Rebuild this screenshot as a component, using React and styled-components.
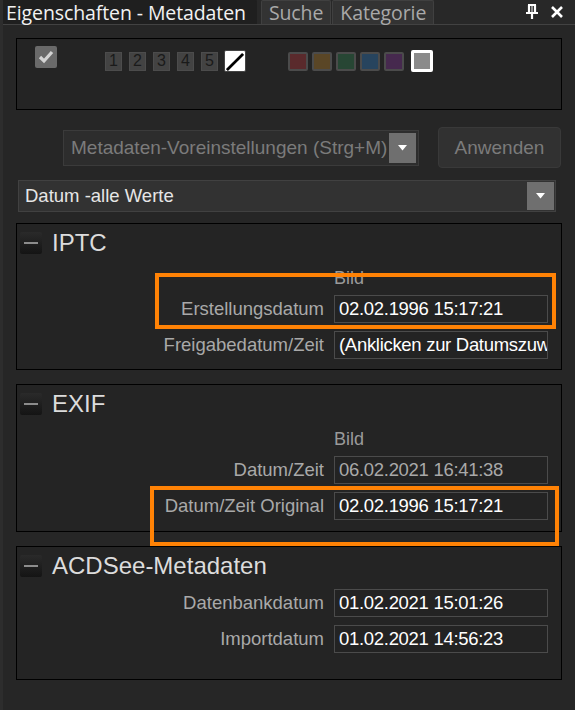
import React from 'react'
import styled, { createGlobalStyle } from 'styled-components'

const GlobalStyle = createGlobalStyle`
  html, body {
    margin: 0;
    padding: 0;
    background: #262626;
  }
  * {
    box-sizing: border-box;
  }
`

const ratings = ['1', '2', '3', '4', '5']
const labels = ['#5a2a2c', '#5a4626', '#274634', '#27445e', '#46294e']

const sections = [
  {
    title: 'IPTC',
    bild: true,
    pb: 10,
    mt: 10,
    rows: [
      { label: 'Erstellungsdatum', value: '02.02.1996 15:17:21' },
      { label: 'Freigabedatum/Zeit', value: '(Anklicken zur Datumszuweisung)' },
    ],
  },
  {
    title: 'EXIF',
    bild: true,
    pb: 11,
    mt: 10,
    rows: [
      { label: 'Datum/Zeit', value: '06.02.2021 16:41:38', muted: true },
      { label: 'Datum/Zeit Original', value: '02.02.1996 15:17:21' },
    ],
  },
  {
    title: 'ACDSee-Metadaten',
    pb: 26,
    mt: 12,
    rows: [
      { label: 'Datenbankdatum', value: '01.02.2021 15:01:26' },
      { label: 'Importdatum', value: '01.02.2021 14:56:23' },
    ],
  },
]

function Arrow() {
  return (
    <svg width='9' height='6' viewBox='0 0 9 6'>
      <path d='M0 0 H9 L4.5 5.5 Z' fill='#fff' />
    </svg>
  )
}

function App() {
  return (
    <>
      <GlobalStyle />
      <Panel>
        <TabBar>
          <Tab active>Eigenschaften - Metadaten</Tab>
          <Tab>Suche</Tab>
          <Tab>Kategorie</Tab>
          <TabTools>
            <svg width='14' height='16' viewBox='0 0 14 16'>
              <path d='M3 1 H11 M4 1 V9 M10 1 V9 M1 9 H13 M7 9 V15' stroke='#fff' strokeWidth='2.2' fill='none' />
              <path d='M7 1 V9' stroke='#fff' strokeWidth='1' />
            </svg>
            <svg width='14' height='14' viewBox='0 0 14 14'>
              <path d='M2 2 L12 12 M12 2 L2 12' stroke='#fff' strokeWidth='2.6' />
            </svg>
          </TabTools>
        </TabBar>

        <Body>
          <TopBox>
            <CheckBox>
              <svg width='16' height='14' viewBox='0 0 16 14'>
                <path d='M2 7 L6 11 L14 2' stroke='#d4d4d4' strokeWidth='3.2' fill='none' />
              </svg>
            </CheckBox>
            <Ratings>
              {ratings.map(r => (
                <RatingBox key={r}>{r}</RatingBox>
              ))}
              <ClearBox>
                <svg width='20' height='20' viewBox='0 0 20 20'>
                  <path d='M1 19 L19 1' stroke='#000' strokeWidth='3.2' />
                </svg>
              </ClearBox>
            </Ratings>
            <Labels>
              {labels.map(c => (
                <LabelBox key={c} color={c} />
              ))}
              <LabelBox color='#8a8a8a' selected />
            </Labels>
          </TopBox>

          <PresetRow>
            <PresetSelect>
              <span>Metadaten-Voreinstellungen (Strg+M)</span>
              <DropButton small>
                <Arrow />
              </DropButton>
            </PresetSelect>
            <ApplyButton>Anwenden</ApplyButton>
          </PresetRow>

          <ViewSelect>
            <span>Datum -alle Werte</span>
            <DropButton>
              <Arrow />
            </DropButton>
          </ViewSelect>

          <Sections>
            {sections.map(s => (
              <Section key={s.title} pb={s.pb}>
                <SectionHead>
                  <Collapse />
                  {s.title}
                </SectionHead>
                <Fields mt={s.mt}>
                  {s.bild && (
                    <>
                      <span />
                      <ColumnTitle>Bild</ColumnTitle>
                    </>
                  )}
                  {s.rows.map(r => (
                    <React.Fragment key={r.label}>
                      <FieldLabel>{r.label}</FieldLabel>
                      <FieldValue muted={r.muted}>{r.value}</FieldValue>
                    </React.Fragment>
                  ))}
                </Fields>
              </Section>
            ))}
          </Sections>
        </Body>

        <Highlight style={{ left: 152, top: 273, width: 401, height: 56 }} />
        <Highlight style={{ left: 147, top: 486, width: 409, height: 60 }} />
      </Panel>
    </>
  )
}

export default App

const Panel = styled.div`
  position: relative;
  width: 575px;
  height: 710px;
  overflow: hidden;
  background: #262626;
  border-left: 3px solid #2d2d2d;
  font-family: 'Liberation Sans', Arial, sans-serif;
`

const TabBar = styled.div`
  display: flex;
  align-items: stretch;
  height: 25px;
  margin-left: -3px;
  background: #282828;
  border-bottom: 1px solid #424242;
`

const Tab = styled.div`
  display: flex;
  align-items: center;
  padding: 0 ${p => (p.active ? '10px' : '7px')} 0 ${p => (p.active ? '5px' : '7px')};
  margin-right: ${p => (p.active ? '4px' : '1px')};
  font-family: 'Open Sans', 'Noto Sans', sans-serif;
  font-size: 19.5px;
  letter-spacing: -0.1px;
  color: ${p => (p.active ? '#f2f2f2' : '#a9a9a9')};
  background: ${p => (p.active ? '#1f1f1f' : '#333')};
  border: 1px solid ${p => (p.active ? '#1f1f1f' : '#404040')};
  border-bottom: none;
  border-radius: 2px 2px 0 0;
  white-space: nowrap;
`

const TabTools = styled.div`
  display: flex;
  align-items: center;
  gap: 11px;
  margin-left: auto;
  padding-right: 11px;
`

const Body = styled.div`
  padding: 13px 13px 0 13px;
`

const TopBox = styled.div`
  display: flex;
  align-items: flex-start;
  height: 72px;
  padding: 7px 0 0 18px;
  background: #242424;
  border: 1px solid #000;
`

const CheckBox = styled.div`
  display: flex;
  align-items: center;
  justify-content: center;
  width: 22px;
  height: 22px;
  background: #6a6a6a;
  border-radius: 2px;
`

const Ratings = styled.div`
  display: flex;
  align-items: center;
  gap: 7px;
  margin: 4px 0 0 48px;
`

const RatingBox = styled.div`
  display: flex;
  align-items: center;
  justify-content: center;
  width: 17px;
  height: 19px;
  background: #434343;
  border: 1px solid #4c4c4c;
  color: #1a1a1a;
  font-size: 16px;
`

const ClearBox = styled.div`
  display: flex;
  width: 22px;
  height: 22px;
  padding: 1px;
  margin-left: -1px;
  background: #fff;
  border: 1px solid #444;
  border-radius: 2px;
`

const Labels = styled.div`
  display: flex;
  align-items: center;
  gap: 4px;
  margin: 4px 0 0 42px;
`

const LabelBox = styled.div`
  width: ${p => (p.selected ? '22px' : '20px')};
  height: ${p => (p.selected ? '22px' : '19px')};
  margin-left: ${p => (p.selected ? '3px' : '0')};
  background: ${p => p.color};
  border: ${p => (p.selected ? '3px solid #fff' : '2px solid #4b4b4b')};
  border-radius: 2px;
`

const PresetRow = styled.div`
  display: flex;
  justify-content: flex-end;
  align-items: center;
  gap: 19px;
  margin-top: 17px;
  padding-right: 1px;
`

const PresetSelect = styled.div`
  display: flex;
  align-items: center;
  justify-content: space-between;
  width: 356px;
  height: 36px;
  padding: 0 2px 0 7px;
  background: #2d2d2d;
  border: 1px solid #3b3b3b;
  color: #7b7b7b;
  font-size: 19px;
  white-space: nowrap;
`

const DropButton = styled.div`
  display: flex;
  align-items: center;
  justify-content: center;
  width: 27px;
  height: ${p => (p.small ? '30px' : '28px')};
  background: #6f6f6f;
`

const ApplyButton = styled.button`
  width: 123px;
  height: 41px;
  background: #313131;
  border: 1px solid #393939;
  border-radius: 4px;
  color: #7b7b7b;
  font-family: 'Liberation Sans', Arial, sans-serif;
  font-size: 19px;
`

const ViewSelect = styled.div`
  display: flex;
  align-items: center;
  justify-content: space-between;
  height: 32px;
  margin: 12px 6px 0 2px;
  padding: 0 1px 0 6px;
  background: #323232;
  border: 1px solid #414141;
  color: #e6e6e6;
  font-size: 18.5px;
`

const Sections = styled.div`
  display: flex;
  flex-direction: column;
  gap: 14px;
  margin-top: 11px;
`

const Section = styled.div`
  padding: 8px 13px ${p => p.pb}px 3px;
  background: #242424;
  border: 1px solid #000;
`

const SectionHead = styled.div`
  display: flex;
  align-items: center;
  gap: 10px;
  height: 22px;
  color: #dcdcdc;
  font-size: 24px;
`

const Collapse = styled.div`
  position: relative;
  width: 22px;
  height: 22px;
  background: linear-gradient(#2a2a2a, #141414);
  border-radius: 2px;
  &::after {
    content: '';
    position: absolute;
    left: 4px;
    right: 4px;
    top: 10px;
    height: 2px;
    background: #8c8c8c;
  }
`

const Fields = styled.div`
  display: grid;
  grid-template-columns: 1fr 214px;
  column-gap: 10px;
  row-gap: 8px;
  align-items: center;
  margin-top: ${p => p.mt}px;
`

const ColumnTitle = styled.div`
  height: 20px;
  margin: 4px 0 -1px;
  color: #9a9a9a;
  font-size: 18px;
  line-height: 20px;
`

const FieldLabel = styled.div`
  text-align: right;
  color: #a9a9a9;
  font-size: 18.5px;
  white-space: nowrap;
`

const FieldValue = styled.div`
  height: 28px;
  padding: 0 4px;
  overflow: hidden;
  white-space: nowrap;
  background: #232323;
  border: 1px solid #4b4b4b;
  color: ${p => (p.muted ? '#a9a9a9' : '#fff')};
  font-size: 18.5px;
  letter-spacing: -0.3px;
  line-height: 26px;
`

const Highlight = styled.div`
  position: absolute;
  border: 4px solid #ff8205;
  pointer-events: none;
`
